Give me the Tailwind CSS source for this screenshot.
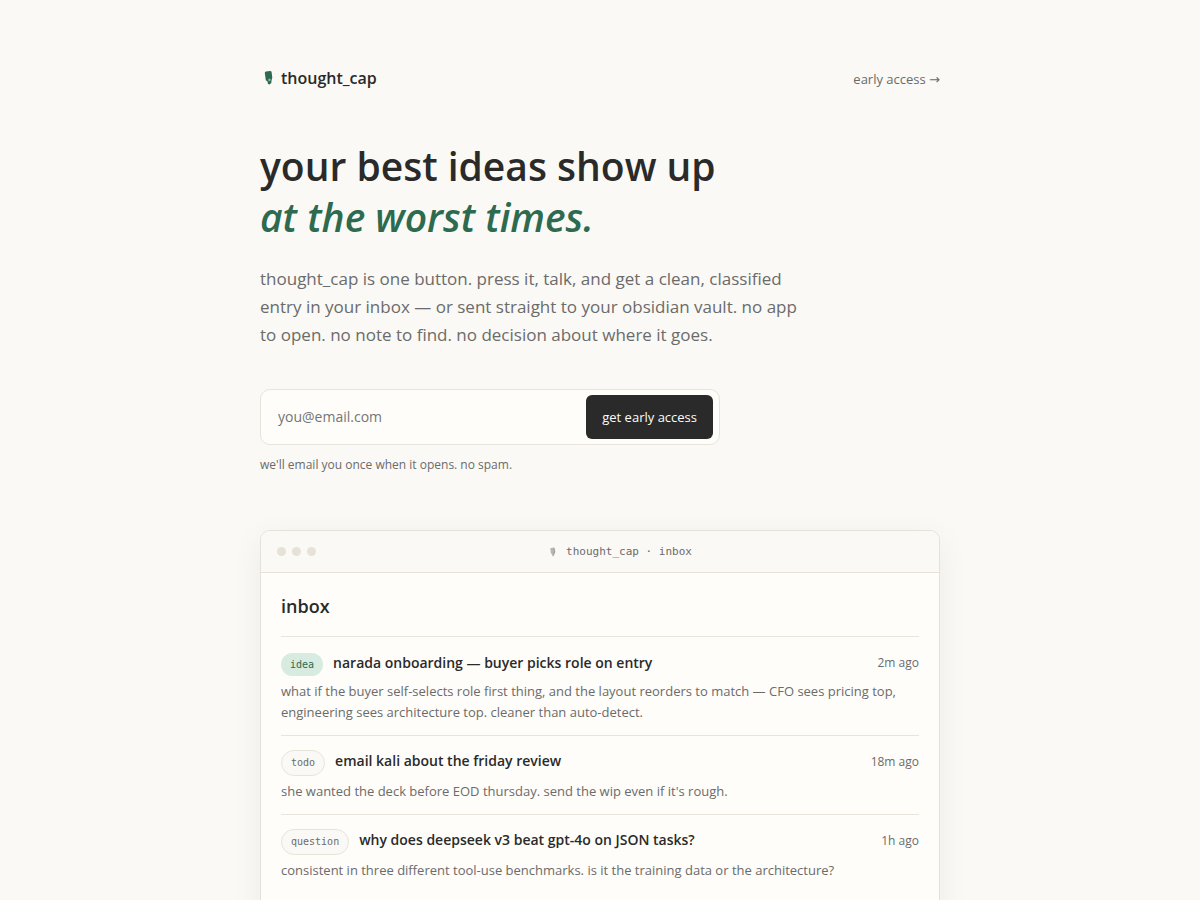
<!DOCTYPE html>
<html lang="en">
<head>
<meta charset="utf-8">
<meta name="viewport" content="width=device-width, initial-scale=1">
<title>thought_cap</title>
<script src="https://cdn.jsdelivr.net/npm/@tailwindcss/browser@4"></script>
</head>
<body class="min-h-screen bg-[#faf9f5] font-['Open_Sans',sans-serif] text-[#2a2a2a]">
<div class="mx-auto max-w-[728px] px-6 pt-16">
  <header class="flex items-center justify-between">
    <a href="#" class="flex items-center gap-2 text-base leading-7 font-semibold">
      <svg class="ml-1 h-4 w-[9px] text-[#2d6a4f]" viewBox="0 0 9 16" fill="currentColor" aria-hidden="true">
        <path d="M.8 3 Q.8 1.800 2 1.600 L6 1 Q7.400 .9 7.600 2.200 L8.300 7.500 L7.500 10.500 L7.300 13 L5.500 14.500 L4 14 L3.500 11.500 L1.800 10.300 Z"/>
        <path d="M4.300 9 L6.600 8.600 L6.200 11 L4.600 11.200 Z" fill="#faf9f5" opacity=".55"/>
      </svg>
      <span>thought_cap</span>
    </a>
    <a href="#early" class="pt-0.5 text-[13px] leading-6 text-[#6b6b6b]">early access <span class="font-['DejaVu_Sans',sans-serif]">→</span></a>
  </header>

  <main>
    <h1 class="mt-12 text-[39px] leading-[51px] font-semibold">your best ideas show up<br><em class="text-[#2d6a4f]">at the worst times.</em></h1>
    <p class="mt-[23px] max-w-[540px] text-[17px] leading-7 text-[#6b6b6b]">thought_cap is one button. press it, talk, and get a clean, classified entry in your inbox — or sent straight to your obsidian vault. no app to open. no note to find. no decision about where it goes.</p>

    <form id="early" class="mt-10 flex max-w-[460px] items-center rounded-[10px] border border-[#e8e4da] bg-[#fefdf9] py-[5px] pr-1.5 pl-[17px]">
      <input type="email" aria-label="email address" placeholder="you@email.com" class="min-w-0 flex-1 bg-transparent text-sm leading-6 outline-none placeholder:text-[#757575]">
      <button type="submit" class="rounded-md bg-[#2a2a2a] px-4 py-3 text-[13px] leading-5 text-[#fefdf9]">get early access</button>
    </form>
    <p class="mt-2.5 text-xs leading-5 text-[#6b6b6b]">we'll email you once when it opens. no spam.</p>

    <section class="mt-[55px] overflow-hidden rounded-[10px] border border-[#e5e2da] bg-[#fefdf9] pb-10 shadow-[0_8px_32px_rgba(0,0,0,0.06)]">
      <div class="flex items-center border-b border-[#e8e0d4] bg-[#faf9f5] px-4 py-3">
        <div class="flex gap-1.5">
          <span class="size-[9px] rounded-full bg-[#e6e2d8]"></span>
          <span class="size-[9px] rounded-full bg-[#e6e2d8]"></span>
          <span class="size-[9px] rounded-full bg-[#e6e2d8]"></span>
        </div>
        <div class="flex flex-1 items-center justify-center gap-2 font-['DejaVu_Sans_Mono',monospace] text-[11px] leading-[17px] text-[#6b6b6b]">
          <svg class="h-2.5 w-[11px]" viewBox="0 0 7 10" aria-hidden="true">
            <path d="M1.300 1.200 L4.800 .6 L5.600 5 L5 9 L3.500 9.300 L2.900 7.200 L1.900 6.300 Z" fill="#b4b6b6"/>
            <path d="M5 .8 L5.800 5 L4.800 7" fill="none" stroke="#8c857e" stroke-width=".8"/>
          </svg>
          <span>thought_cap · inbox</span>
        </div>
      </div>
      <div class="px-5 pt-5">
        <h2 class="pb-4 text-lg leading-[27px] font-semibold">inbox</h2>
        <article class="border-t border-[#e8e4da] py-3">
          <div class="flex items-start gap-2.5">
            <span class="mt-1 rounded-full bg-[#d8ebe0] px-[9px] py-[3px] font-['DejaVu_Sans_Mono',monospace] text-[10px] leading-[17px] text-[#2d6a4f]">idea</span>
            <h3 class="flex-1 text-sm leading-7 font-semibold">narada onboarding — buyer picks role on entry</h3>
            <span class="text-xs leading-7 text-[#6b6b6b]">2m ago</span>
          </div>
          <p class="mt-1 text-[13px] leading-[21px] text-[#6b6b6b]">what if the buyer self-selects role first thing, and the layout reorders to match — CFO sees pricing top, engineering sees architecture top. cleaner than auto-detect.</p>
        </article>
        <article class="border-t border-[#e8e4da] py-3">
          <div class="flex items-start gap-2.5">
            <span class="mt-0.5 rounded-full border border-[#e8e4da] bg-[#faf9f5] px-[9px] py-[3px] font-['DejaVu_Sans_Mono',monospace] text-[10px] leading-[18px] text-[#6b6b6b]">todo</span>
            <h3 class="flex-1 text-sm leading-[26px] font-semibold">email kali about the friday review</h3>
            <span class="text-xs leading-7 text-[#6b6b6b]">18m ago</span>
          </div>
          <p class="mt-[5px] text-[13px] leading-[21px] text-[#6b6b6b]">she wanted the deck before EOD thursday. send the wip even if it's rough.</p>
        </article>
        <article class="border-t border-[#e8e4da] py-3">
          <div class="flex items-start gap-2.5">
            <span class="mt-0.5 rounded-full border border-[#e8e4da] bg-[#faf9f5] px-[9px] py-[3px] font-['DejaVu_Sans_Mono',monospace] text-[10px] leading-[18px] text-[#6b6b6b]">question</span>
            <h3 class="flex-1 text-sm leading-[26px] font-semibold">why does deepseek v3 beat gpt-4o on JSON tasks?</h3>
            <span class="text-xs leading-7 text-[#6b6b6b]">1h ago</span>
          </div>
          <p class="mt-[5px] text-[13px] leading-[21px] text-[#6b6b6b]">consistent in three different tool-use benchmarks. is it the training data or the architecture?</p>
        </article>
      </div>
    </section>
  </main>
</div>
</body>
</html>
